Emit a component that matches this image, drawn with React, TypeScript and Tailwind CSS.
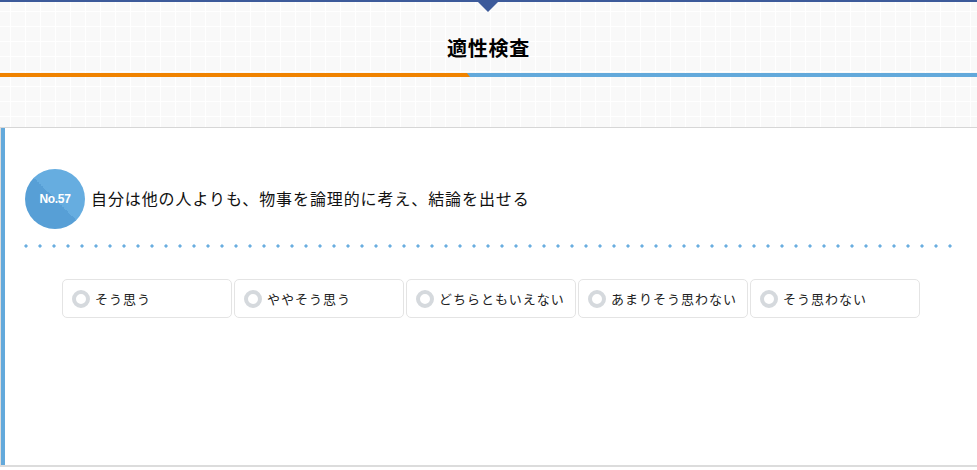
import React from "react";

const options = ["そう思う", "ややそう思う", "どちらともいえない", "あまりそう思わない", "そう思わない"];

export default function App() {
  return (
    <div
      className="w-[977px] h-[470px] overflow-hidden bg-white text-[#111]"
      style={{ fontFamily: '"Noto Sans CJK JP", "Noto Sans", sans-serif' }}
    >
      {/* header */}
      <div className="relative h-[128px] border-t-2 border-[#3c5a9a] bg-[#f9f9f9] bg-[linear-gradient(#ffffff_1.5px,transparent_1.5px),linear-gradient(90deg,#ffffff_1.5px,transparent_1.5px)] bg-[length:15px_15px] bg-[position:10px_9px] border-b border-b-[#d6d6d6]">
        <div className="absolute left-[478px] top-0 w-0 h-0 border-l-[10px] border-r-[10px] border-t-[10px] border-l-transparent border-r-transparent border-t-[#3c5a9a]" />
        <div className="flex justify-center pt-[31px] h-[71px]">
          <h1 className="text-[20px] font-bold leading-[30px] tracking-[0.8px] text-black">適性検査</h1>
        </div>
        <div className="flex h-[4px]">
          <div className="w-[470px] bg-[#f08300]" />
          <div className="flex-1 bg-[#63a9db] -ml-[3px] [clip-path:polygon(0_0,100%_0,100%_100%,3px_100%)]" />
        </div>
      </div>
      {/* card */}
      <div className="h-[339px] border-l border-l-[#dcdcdc] border-b-2 border-b-[#dcdcdc] bg-white">
        <div className="h-full border-l-4 border-l-[#63a9db] pl-[20px] pt-[41px]">
          <div className="flex items-center gap-[6px]">
            <div className="w-[60px] h-[60px] rounded-full bg-[linear-gradient(45deg,#579fd6_50%,#66ade0_50%)] flex items-center justify-center">
              <span className="text-white font-bold text-[12px] tracking-[-0.3px]" style={{ fontFamily: '"Liberation Sans", Arial, sans-serif' }}>No.57</span>
            </div>
            <p className="text-[16px] leading-[20px] tracking-[0.9px] text-[#111] -mt-[2px]">自分は他の人よりも、物事を論理的に考え、結論を出せる</p>
          </div>
          <div className="mt-[15px] ml-[-6px] w-[938px] h-[4px] bg-[radial-gradient(circle,#6aaee0_1.4px,transparent_1.8px)] bg-[length:14px_4px]" />
          <div className="mt-[31px] ml-[37px] flex gap-[2px]">
            {options.map((o) => (
              <label
                key={o}
                className="w-[170px] h-[39px] rounded-[5px] border border-[#e4e4e4] bg-white flex items-center pl-[9px] gap-[5px]"
              >
                <span className="w-[18px] h-[18px] rounded-full border-[4px] border-[#d5d9dd] bg-white shrink-0" />
                <span className="text-[13px] leading-[18px] tracking-[1px] text-[#222]">{o}</span>
              </label>
            ))}
          </div>
        </div>
      </div>
    </div>
  );
}
